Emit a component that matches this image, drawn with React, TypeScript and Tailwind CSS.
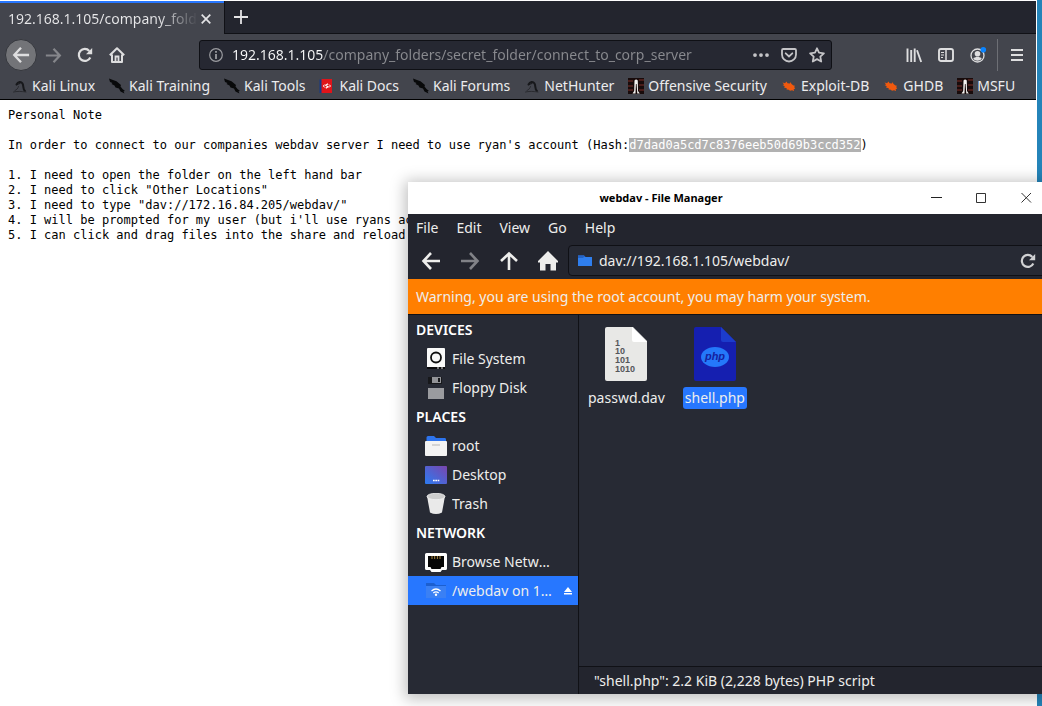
import React, { type ReactNode } from "react";

type Kind = "dragon" | "slash" | "docs" | "offsec" | "bug";

const bookmarks: { label: string; kind: Kind }[] = [
  { label: "Kali Linux", kind: "dragon" },
  { label: "Kali Training", kind: "slash" },
  { label: "Kali Tools", kind: "slash" },
  { label: "Kali Docs", kind: "docs" },
  { label: "Kali Forums", kind: "slash" },
  { label: "NetHunter", kind: "dragon" },
  { label: "Offensive Security", kind: "offsec" },
  { label: "Exploit-DB", kind: "bug" },
  { label: "GHDB", kind: "bug" },
  { label: "MSFU", kind: "offsec" },
];

function BookmarkIcon({ kind }: { kind: Kind }) {
  return (
    <svg viewBox="0 0 16 16" className="size-4 shrink-0" aria-hidden="true">
      {kind === "dragon" && (
        <g fill="none" stroke="#17181b" strokeLinecap="round">
          <path d="M4.5 6.5C6 3.5 9 3 10.5 5.500C12 8 10.500 11 13 13" strokeWidth="2" />
          <path d="M5 6.500L8 5.500" strokeWidth="1" />
          <path d="M6.500 8.500C6 10.500 4.500 12 3 12.500M1.500 14c3-.8 8-.8 12.500 0" strokeWidth="1" stroke="#2a2b30" />
        </g>
      )}
      {kind === "slash" && (
        <path d="M0 .5l4 1.500 3.500 1.200L12 7l-.5 1.500L13.500 11l2.500 2-1.500.3 1 2.200-4-2L10 10.500 6.500 9.500 5.500 7.500 2.500 6 3.500 5 1 4z" fill="#08090a" />
      )}
      {kind === "docs" && (
        <g>
          <path d="M.5 1.500h3V15h-3z" fill="#173a86" />
          <path d="M2.500 1h10.500v14H2.500z" fill="#e0141a" />
          <path d="M5.800 6.500L4.300 8l1.500 1.500M10 6.500L11.500 8 10 9.500" fill="none" stroke="#fff" />
          <path d="M9 5.800L6.800 7.300 9 8.700 6.800 10.200" fill="none" stroke="#fff" strokeWidth="1.200" />
        </g>
      )}
      {kind === "offsec" && (
        <g>
          <path d="M0 0h16v16H0z" fill="#180b0b" />
          <path d="M0 3h5M0 8h5M0 12h5M11 2h5M11 7h5M11 12h5" stroke="#5b2421" strokeWidth="1.300" />
          <path d="M4.500 15.500L6.200 13 6.500 2.500Q8 .5 9.800 2.500L10 13l1.800 2.500H9.300L8.600 6H7.900L7.500 15.500z" fill="#f3f1ee" />
        </g>
      )}
      {kind === "bug" && (
        <path d="M1.500 4.500l2.500.8L5.500 3.500l1 1.700 2.500.3.5-1.500 1 2 2 1.500 1.500.3-.8 1.200 1 1.800-1.500.2L13 13l-2-.8-2 .6-1.200-1-2.300-.3.3-1.200L3 9.500l.8-1.300L1.500 7l1.600-.5z" fill="#f0590e" />
      )}
    </svg>
  );
}

function IconButton({ label, children, className = "size-8" }: { label: string; children: ReactNode; className?: string }) {
  return (
    <button type="button" aria-label={label} className={`flex shrink-0 items-center justify-center ${className}`}>
      {children}
    </button>
  );
}

function ReloadIcon() {
  return (
    <svg viewBox="0 0 16 16" className="size-4" aria-hidden="true">
      <path d="M13.300 10.500A6 6 0 1 1 12.300 3.900" fill="none" stroke="currentColor" strokeWidth="2.200" />
      <path d="M15.200 1v6.300H9z" fill="currentColor" />
    </svg>
  );
}

function ArrowIcon({ className }: { className: string }) {
  return (
    <svg viewBox="0 0 20 20" className={className} fill="none" stroke="currentColor" strokeWidth="2.600" aria-hidden="true">
      <path d="M19 10H3M10 2L2.500 10l7.500 8" />
    </svg>
  );
}

function Browser() {
  return (
    <header className="border-b border-black bg-[#43454d]">
      <div className="flex h-[33px] bg-[#23252e]">
        <div className="flex w-56 items-center border-t-2 border-[#2777ff] bg-[#43454d] pl-2">
          <span className="w-[188px] overflow-hidden whitespace-nowrap bg-[linear-gradient(to_right,#e8e8ea_150px,#43454d_190px)] bg-clip-text text-sm leading-5 text-transparent">
            192.168.1.105/company_folders
          </span>
          <IconButton label="Close tab" className="size-5">
            <svg viewBox="0 0 10 10" className="size-2.5" aria-hidden="true">
              <path d="M.7.7l8.600 8.600M9.300.7L.7 9.300" stroke="#e4e4e6" strokeWidth="1.700" />
            </svg>
          </IconButton>
        </div>
        <div className="flex flex-1 items-center border-b border-l border-[#101116]">
          <IconButton label="New tab">
            <svg viewBox="0 0 14 14" className="size-3.5" aria-hidden="true">
              <path d="M7 0v14M0 7h14" stroke="#e4e4e6" strokeWidth="1.800" />
            </svg>
          </IconButton>
        </div>
      </div>

      <div className="flex h-[42px] items-center pl-[5px] text-[#dededf]">
        <IconButton label="Back" className="size-8 rounded-full border border-[#35373d] bg-[#737478]">
          <ArrowIcon className="size-[18px]" />
        </IconButton>
        <IconButton label="Forward" className="size-8 text-[#85868b]">
          <ArrowIcon className="size-[17px] -scale-x-100" />
        </IconButton>
        <IconButton label="Reload">
          <ReloadIcon />
        </IconButton>
        <IconButton label="Home">
          <svg viewBox="0 0 16 16" className="size-4" aria-hidden="true">
            <path d="M.8 8.200L8 1.300l7.200 6.900M3 7.500V15h10V7.500" fill="none" stroke="currentColor" strokeWidth="2" strokeLinejoin="round" />
            <path d="M6.500 15V9.500h3V15" fill="none" stroke="currentColor" strokeWidth="1.800" />
          </svg>
        </IconButton>
        <div className="ml-[66px] flex h-[30px] flex-1 items-center gap-2 rounded-[3px] border border-[#0f1015] bg-[#262832] pl-2 text-[#c4c4c7]">
          <svg viewBox="0 0 16 16" className="size-4 shrink-0 text-[#9b9ca0]" aria-hidden="true">
            <circle cx="8" cy="8" r="6.300" fill="none" stroke="currentColor" strokeWidth="1.200" />
            <path d="M7.100 7h1.800v5H7.100zM7.100 4h1.800v1.800H7.100z" fill="currentColor" />
          </svg>
          <input
            aria-label="Address"
            readOnly
            value="192.168.1.105/company_folders/secret_folder/connect_to_corp_server"
            className="min-w-0 flex-1 bg-[linear-gradient(to_right,#f9f9fa_92px,#898a8f_92px)] bg-clip-text text-sm leading-5 text-transparent outline-none"
          />
          <div className="flex items-center">
            <IconButton label="Page actions" className="h-7 w-7">
              <svg viewBox="0 0 16 16" className="size-4" aria-hidden="true">
                <path d="M2 6.200a1.900 1.900 0 1 0 0 3.800 1.900 1.900 0 1 0 0-3.800zm6 0a1.900 1.900 0 1 0 0 3.800 1.900 1.900 0 1 0 0-3.800zm6 0a1.900 1.900 0 1 0 0 3.800 1.900 1.900 0 1 0 0-3.800z" fill="currentColor" />
              </svg>
            </IconButton>
            <IconButton label="Save to Pocket" className="h-7 w-7">
              <svg viewBox="0 0 16 16" className="size-4" fill="none" stroke="currentColor" aria-hidden="true">
                <path d="M2.200 2h11.600c.7 0 1.200.5 1.200 1.200V7.500A7 7 0 0 1 1 7.500V3.200C1 2.500 1.500 2 2.200 2z" strokeWidth="1.800" />
                <path d="M4.700 6.300L8 9.400l3.300-3.100" strokeWidth="1.800" strokeLinecap="round" />
              </svg>
            </IconButton>
            <IconButton label="Bookmark this page" className="h-7 w-7">
              <svg viewBox="0 0 16 16" className="size-4" aria-hidden="true">
                <path d="M8 1.300l2 4.400 4.900.6-3.600 3.300.9 4.900L8 12.100l-4.200 2.400.9-4.900L1.100 6.300 6 5.700z" fill="none" stroke="currentColor" strokeWidth="1.800" strokeLinejoin="round" />
              </svg>
            </IconButton>
          </div>
        </div>
        <div className="ml-[66px] flex items-center">
          <IconButton label="Library">
            <svg viewBox="0 0 16 16" className="size-4" fill="none" stroke="currentColor" strokeWidth="1.900" aria-hidden="true">
              <path d="M1.500 1.500V15M5.200 3v12M8.700 1.500V15M11 3.200L15.200 15" />
            </svg>
          </IconButton>
          <IconButton label="Sidebars">
            <svg viewBox="0 0 16 16" className="size-4" fill="none" stroke="currentColor" aria-hidden="true">
              <rect x="1" y="2" width="14" height="12" rx="2" strokeWidth="1.900" />
              <path d="M8 2v12" strokeWidth="1.500" />
              <path d="M3 5.500h3M3 8h3M3 10.500h2" strokeWidth="1" />
            </svg>
          </IconButton>
          <IconButton label="Account">
            <svg viewBox="0 0 16 16" className="size-4 overflow-visible" aria-hidden="true">
              <circle cx="7.500" cy="8.500" r="6.500" fill="none" stroke="currentColor" strokeWidth="1.300" />
              <circle cx="7.500" cy="6.700" r="2.800" fill="currentColor" />
              <path d="M3.300 11.500c1-2 7.400-2 8.400 0-1.600 3-6.800 3-8.400 0z" fill="currentColor" />
              <circle cx="13.300" cy="2.700" r="2.800" fill="#0a84ff" />
            </svg>
          </IconButton>
          <div className="ml-[3px] h-8 border-l border-[#6d6f75]" />
          <IconButton label="Open menu" className="mr-[3px] ml-[3px] size-8">
            <svg viewBox="0 0 14 14" className="size-3.5" aria-hidden="true">
              <path d="M1 2h12M1 7h12M1 12h12" stroke="currentColor" strokeWidth="2" />
            </svg>
          </IconButton>
        </div>
      </div>

      <nav className="flex h-[23px] items-center gap-3.5 overflow-hidden pb-[3px] pl-3" aria-label="Bookmarks">
        {bookmarks.map((b) => (
          <a key={b.label} href="#" className="flex shrink-0 items-center gap-1 text-sm leading-5 text-[#ececee]">
            <BookmarkIcon kind={b.kind} />
            {b.label}
          </a>
        ))}
      </nav>
    </header>
  );
}

const sidebar: { heading: string; items: { label: string; icon: ReactNode; active?: boolean }[] }[] = [
  {
    heading: "DEVICES",
    items: [
      {
        label: "File System",
        icon: (
          <>
            <rect x="2" y="0" width="18" height="20" rx="1" fill="#fafafa" />
            <path d="M2 19h18v2H2z" fill="#0c0c0e" />
            <path d="M12 20h2M16 20h2" stroke="#ddd" />
            <circle cx="11" cy="9.500" r="5" fill="none" stroke="#111" strokeWidth="1.800" />
          </>
        ),
      },
      {
        label: "Floppy Disk",
        icon: (
          <>
            <path d="M3 0h14v7H3z" fill="#17181b" />
            <path d="M7 0h9v6H7z" fill="#929397" />
            <path d="M13 1h2v4h-2z" fill="#17181b" />
            <path d="M3 11h16v11H3z" fill="#9a9b9f" />
          </>
        ),
      },
    ],
  },
  {
    heading: "PLACES",
    items: [
      {
        label: "root",
        icon: (
          <>
            <path d="M1.500 2.500Q1.500 1 3 1h6l2 2h9q1 0 1 1.500V9h-19.500z" fill="#2d74ee" />
            <rect x="0" y="6" width="22" height="15" rx="1" fill="#f3f3f3" />
            <path d="M7 10h8" stroke="#b5b5b5" />
          </>
        ),
      },
      {
        label: "Desktop",
        icon: (
          <>
            <defs>
              <linearGradient id="desk" x1="0" y1="1" x2="1" y2="0">
                <stop stopColor="#2b7cf2" />
                <stop offset="1" stopColor="#7b45ad" />
              </linearGradient>
            </defs>
            <rect y="2" width="22" height="18" rx="1" fill="url(#desk)" />
            <path d="M8 16.500h6.500" stroke="#fff" strokeWidth="1.500" strokeDasharray="1.700 .6" />
          </>
        ),
      },
      {
        label: "Trash",
        icon: (
          <>
            <path d="M2 3l3 16.500q6 3 12 0L20 3z" fill="#e9e9e9" />
            <ellipse cx="11" cy="3.500" rx="9" ry="3.200" fill="#cdcdcd" stroke="#f2f2f2" strokeWidth=".8" />
          </>
        ),
      },
    ],
  },
  {
    heading: "NETWORK",
    items: [
      {
        label: "Browse Network",
        icon: (
          <>
            <path d="M1.500 2h19q1.500 0 1.500 1.500v14q0 1.500-1.500 1.500H17l-1.500 2h-9L5 19H1.500Q0 19 0 17.500v-14Q0 2 1.500 2z" fill="#fff" />
            <path d="M3 5h16v11h-2.500l-1 2h-9l-1-2H3z" fill="#060606" />
            <path d="M7 5v3M9.700 5v3M12.400 5v3M15 5v3" stroke="#a8853f" />
          </>
        ),
      },
      {
        label: "/webdav on 172.16.84.205",
        active: true,
        icon: (
          <>
            <path d="M1 3h8l2 2h10v4H1z" fill="#1c5fd0" />
            <path d="M1 6h20v12H1z" fill="#3a80f4" />
            <path d="M6.500 11q4.500-4 9 0M8.300 13q2.700-2.300 5.400 0" fill="none" stroke="#fff" strokeWidth="1.300" />
            <circle cx="11" cy="14.800" r="1.200" fill="#fff" />
          </>
        ),
      },
    ],
  },
];

function FileManager() {
  return (
    <section
      aria-label="webdav - File Manager"
      className="absolute top-[182px] -right-[7px] bottom-3 left-[408px] flex flex-col bg-[#272a34] text-sm leading-5 text-[#eeeeec] shadow-[0_2px_14px_3px_rgba(0,0,0,0.25)]"
    >
      <div className="flex h-8 shrink-0 items-center bg-white text-black">
        <h1 className="flex-1 text-center text-[11px] font-bold">webdav - File Manager</h1>
        <IconButton label="Minimize" className="h-8 w-[45px]">
          <svg viewBox="0 0 11 11" className="size-[11px]" aria-hidden="true">
            <path d="M0 4.500h11" stroke="#222" />
          </svg>
        </IconButton>
        <IconButton label="Maximize" className="h-8 w-[45px]">
          <svg viewBox="0 0 11 11" className="size-[11px]" aria-hidden="true">
            <path d="M.5.5h9v9h-9z" fill="none" stroke="#333" />
          </svg>
        </IconButton>
        <IconButton label="Close" className="h-8 w-[45px]">
          <svg viewBox="0 0 11 11" className="size-[11px]" aria-hidden="true">
            <path d="M.5 0l9.500 9.500M10 0L.5 9.500" stroke="#333" />
          </svg>
        </IconButton>
      </div>

      <nav className="flex h-7 shrink-0 items-center gap-[18px] bg-[#23252e] px-2" aria-label="Menu bar">
        {["File", "Edit", "View", "Go", "Help"].map((m) => (
          <button key={m} type="button">{m}</button>
        ))}
      </nav>

      <div className="flex h-[37px] shrink-0 items-center bg-[#23252e] pl-[3px]">
        <IconButton label="Back" className="h-8 w-[39px]">
          <ArrowIcon className="size-5" />
        </IconButton>
        <IconButton label="Forward" className="h-8 w-[39px] text-[#818287]">
          <ArrowIcon className="size-5 -scale-x-100" />
        </IconButton>
        <IconButton label="Up" className="h-8 w-[39px]">
          <ArrowIcon className="size-5 rotate-90" />
        </IconButton>
        <IconButton label="Home" className="h-8 w-10">
          <svg viewBox="0 0 20 20" className="size-5" aria-hidden="true">
            <path d="M10 0l10 10v1.500h-2V19.500h-5.500V13h-5v6.500H2v-8H0V10z" fill="currentColor" />
          </svg>
        </IconButton>
        <div className="flex h-[31px] flex-1 items-center gap-1.5 rounded border border-[#0f1015] bg-[#272a34] pr-3 pl-2">
          <svg viewBox="0 0 16 16" className="size-4 shrink-0" aria-hidden="true">
            <path d="M1 2.500h6l1.500 1.500H15v9H1z" fill="#2f7fef" />
            <path d="M1 2.500h6l1.500 1.500H7L6 5H1z" fill="#2463c5" />
          </svg>
          <input aria-label="Location" readOnly value="dav://192.168.1.105/webdav/" className="min-w-0 flex-1 bg-transparent outline-none" />
          <IconButton label="Reload" className="size-4 text-[#d0d1d3]">
            <ReloadIcon />
          </IconButton>
        </div>
      </div>

      <p className="flex h-9 shrink-0 items-center border-b border-[#101116] bg-[#ff7f00] px-2">
        Warning, you are using the root account, you may harm your system.
      </p>

      <div className="flex min-h-0 flex-1">
        <aside className="w-[171px] shrink-0 border-r border-[#101116]">
          {sidebar.map((group) => (
            <div key={group.heading}>
              <h2 className="px-2 leading-[29px] font-semibold text-white">{group.heading}</h2>
              {group.items.map((item) => (
                <button
                  key={item.label}
                  type="button"
                  className={`flex h-[29px] w-full items-center gap-[5px] pr-1.5 pl-[17px] text-left ${item.active ? "bg-[#2777ff]" : ""}`}
                >
                  <svg viewBox="0 0 22 22" className="size-[22px] shrink-0" aria-hidden="true">{item.icon}</svg>
                  <span className="w-[100px] truncate">{item.label}</span>
                  {item.active && (
                    <svg viewBox="0 0 8 8" className="ml-auto size-2 shrink-0" aria-label="Eject">
                      <path d="M4 0l4 5H0zM0 6h8v1.500H0z" fill="#fff" />
                    </svg>
                  )}
                </button>
              ))}
            </div>
          ))}
        </aside>
        <div className="flex min-w-0 flex-1 flex-col">
          <div className="flex flex-1 items-start gap-4 px-[7px] pt-3">
            <button type="button" className="flex flex-col items-center gap-1.5">
              <svg viewBox="0 0 44 54" className="h-[54px] w-11" aria-hidden="true">
                <path d="M3 0h26l14 14v38q0 2-2 2H3q-2 0-2-2V2q0-2 2-2z" fill="#e8e8e6" />
                <path d="M28 0l15 15H30q-2 0-2-2z" fill="#fff" />
                <g fill="#55565a" fontFamily="Liberation Sans" fontSize="9" fontWeight="700">
                  <text x="11" y="19">1</text>
                  <text x="11" y="27">10</text>
                  <text x="11" y="36">101</text>
                  <text x="11" y="45">1010</text>
                </g>
              </svg>
              <span className="px-0.5 py-px">passwd.dav</span>
            </button>
            <button type="button" className="flex flex-col items-center gap-1.5">
              <svg viewBox="0 0 44 54" className="h-[54px] w-11" aria-hidden="true">
                <path d="M3 0h25l15 15v37q0 2-2 2H3q-2 0-2-2V2q0-2 2-2z" fill="#151fb0" />
                <path d="M28 0l15 15H30q-2 0-2-2z" fill="#1c3ccc" />
                <ellipse cx="22" cy="30" rx="14" ry="10" fill="#2478fa" />
                <text x="22" y="33" textAnchor="middle" fill="#151fa0" fontFamily="Liberation Sans" fontSize="11" fontWeight="700" fontStyle="italic">php</text>
              </svg>
              <span className="rounded-[3px] bg-[#2777ff] px-0.5 py-px">shell.php</span>
            </button>
          </div>
          <footer className="flex h-7 shrink-0 items-center border-t border-[#101116] bg-[#23252e] px-[15px]">
            "shell.php": 2.2 KiB (2,228 bytes) PHP script
          </footer>
        </div>
      </div>
    </section>
  );
}

export default function App() {
  return (
    <div className="relative flex min-h-screen overflow-hidden bg-white pt-px font-['Noto_Sans',sans-serif]">
      <div className="min-w-0 flex-1">
        <Browser />
        <pre className="px-2 py-2 font-['DejaVu_Sans_Mono',monospace] text-xs leading-[15px] text-black">
          {"Personal Note\n\nIn order to connect to our companies webdav server I need to use ryan's account (Hash:"}
          <mark className="bg-[#b1b1b1] text-white">d7dad0a5cd7c8376eeb50d69b3ccd352</mark>
          {`)

1. I need to open the folder on the left hand bar
2. I need to click "Other Locations"
3. I need to type "dav://172.16.84.205/webdav/"
4. I will be prompted for my user (but i'll use ryans acc
5. I can click and drag files into the share and reload m`}
        </pre>
      </div>
      <div className="-mt-px ml-px w-[5px] shrink-0 bg-[#2484b9]" />
      <FileManager />
    </div>
  );
}
